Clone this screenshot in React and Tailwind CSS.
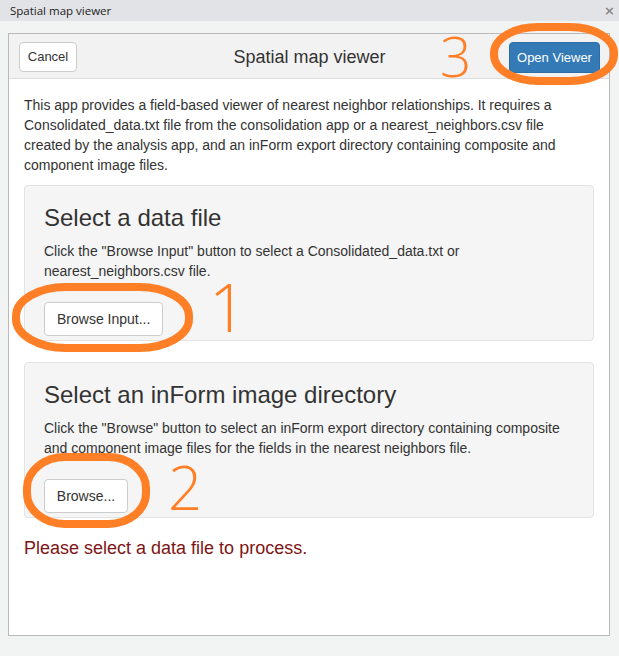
export default function App() {
  return (
    <div className="relative w-[619px] h-[656px] overflow-hidden bg-[#f2f3f3] font-['Liberation_Sans',Arial,sans-serif] text-[#333]">
      {/* window title bar */}
      <div className="h-[21px] bg-[#e2e3e7] flex items-center justify-between pl-[10px] pr-[4px]">
        <span className="font-['Open_Sans',sans-serif] text-[11.5px] text-[#222]">Spatial map viewer</span>
        <span className="font-['DejaVu_Sans',sans-serif] text-[13px] font-bold leading-none text-[#888]">×</span>
      </div>

      {/* dialog */}
      <div className="ml-[8px] mt-[12px] w-[602px] h-[603px] bg-white border border-[#b9b9b9]">
        <div className="h-[45px] bg-[#f2f2f2] border-b border-[#dddddd] grid grid-cols-[1fr_auto_1fr] items-start pt-[8px] pl-[10px] pr-[9px]">
          <div>
            <button className="h-[30px] w-[58px] bg-white border border-[#cccccc] rounded-[4px] text-[13px] text-[#333]">
              Cancel
            </button>
          </div>
          <div className="text-[18px] leading-[20px] pt-[5px] text-[#333]">Spatial map viewer</div>
          <div className="flex justify-end">
            <button className="h-[31px] w-[91px] bg-[#337ab7] border border-[#2e6da4] rounded-[4px] text-[13px] text-white">
              Open Viewer
            </button>
          </div>
        </div>

        <div className="px-[15px] pt-[16px]">
          <p className="text-[14px] leading-[20px] mb-[10px]">
            This app provides a field-based viewer of nearest neighbor relationships. It requires a
            Consolidated_data.txt file from the consolidation app or a nearest_neighbors.csv file
            created by the analysis app, and an inForm export directory containing composite and
            component image files.
          </p>

          <div className="bg-[#f5f5f5] border border-[#e3e3e3] rounded-[4px] px-[19px] pt-[19px] pb-[4px] mb-[21px]">
            <h3 className="text-[24px] leading-[26px] mb-[10px] text-[#333]">Select a data file</h3>
            <p className="text-[14px] leading-[20px] mb-[21px]">
              Click the "Browse Input" button to select a Consolidated_data.txt or
              <br />
              nearest_neighbors.csv file.
            </p>
            <button className="h-[34px] px-[12px] bg-white border border-[#cccccc] rounded-[4px] text-[14px] text-[#333]">
              Browse Input...
            </button>
          </div>

          <div className="bg-[#f5f5f5] border border-[#e3e3e3] rounded-[4px] px-[19px] pt-[19px] pb-[4px]">
            <h3 className="text-[24px] leading-[26px] mb-[10px] text-[#333]">Select an inForm image directory</h3>
            <p className="text-[14px] leading-[20px] mb-[21px]">
              Click the "Browse" button to select an inForm export directory containing composite
              <br />
              and component image files for the fields in the nearest neighbors file.
            </p>
            <button className="h-[34px] w-[84px] bg-white border border-[#cccccc] rounded-[4px] text-[14px] text-[#333]">
              Browse...
            </button>
          </div>

          <p className="mt-[20px] text-[18px] leading-[20px] text-[#7d1515]">Please select a data file to process.</p>
        </div>
      </div>

      {/* orange annotations drawn over the screenshot */}
      <svg className="absolute inset-0 pointer-events-none" width="619" height="656" viewBox="0 0 619 656">
        <g fill="none" stroke="#ff7f27" strokeWidth="8">
          <rect x="16" y="287" width="173" height="61" rx="50" ry="29" />
          <rect x="27" y="457" width="119" height="67" rx="38" ry="31" />
          <rect x="494" y="27" width="120" height="54" rx="44" ry="26" />
        </g>
        <g fill="#ff7f27" fontFamily="'Open Sans', sans-serif" fontWeight="300">
          <text x="209" y="332" fontSize="66">1</text>
          <text x="168" y="510" fontSize="60">2</text>
          <text x="440" y="77" fontSize="55">3</text>
        </g>
      </svg>
    </div>
  );
}
